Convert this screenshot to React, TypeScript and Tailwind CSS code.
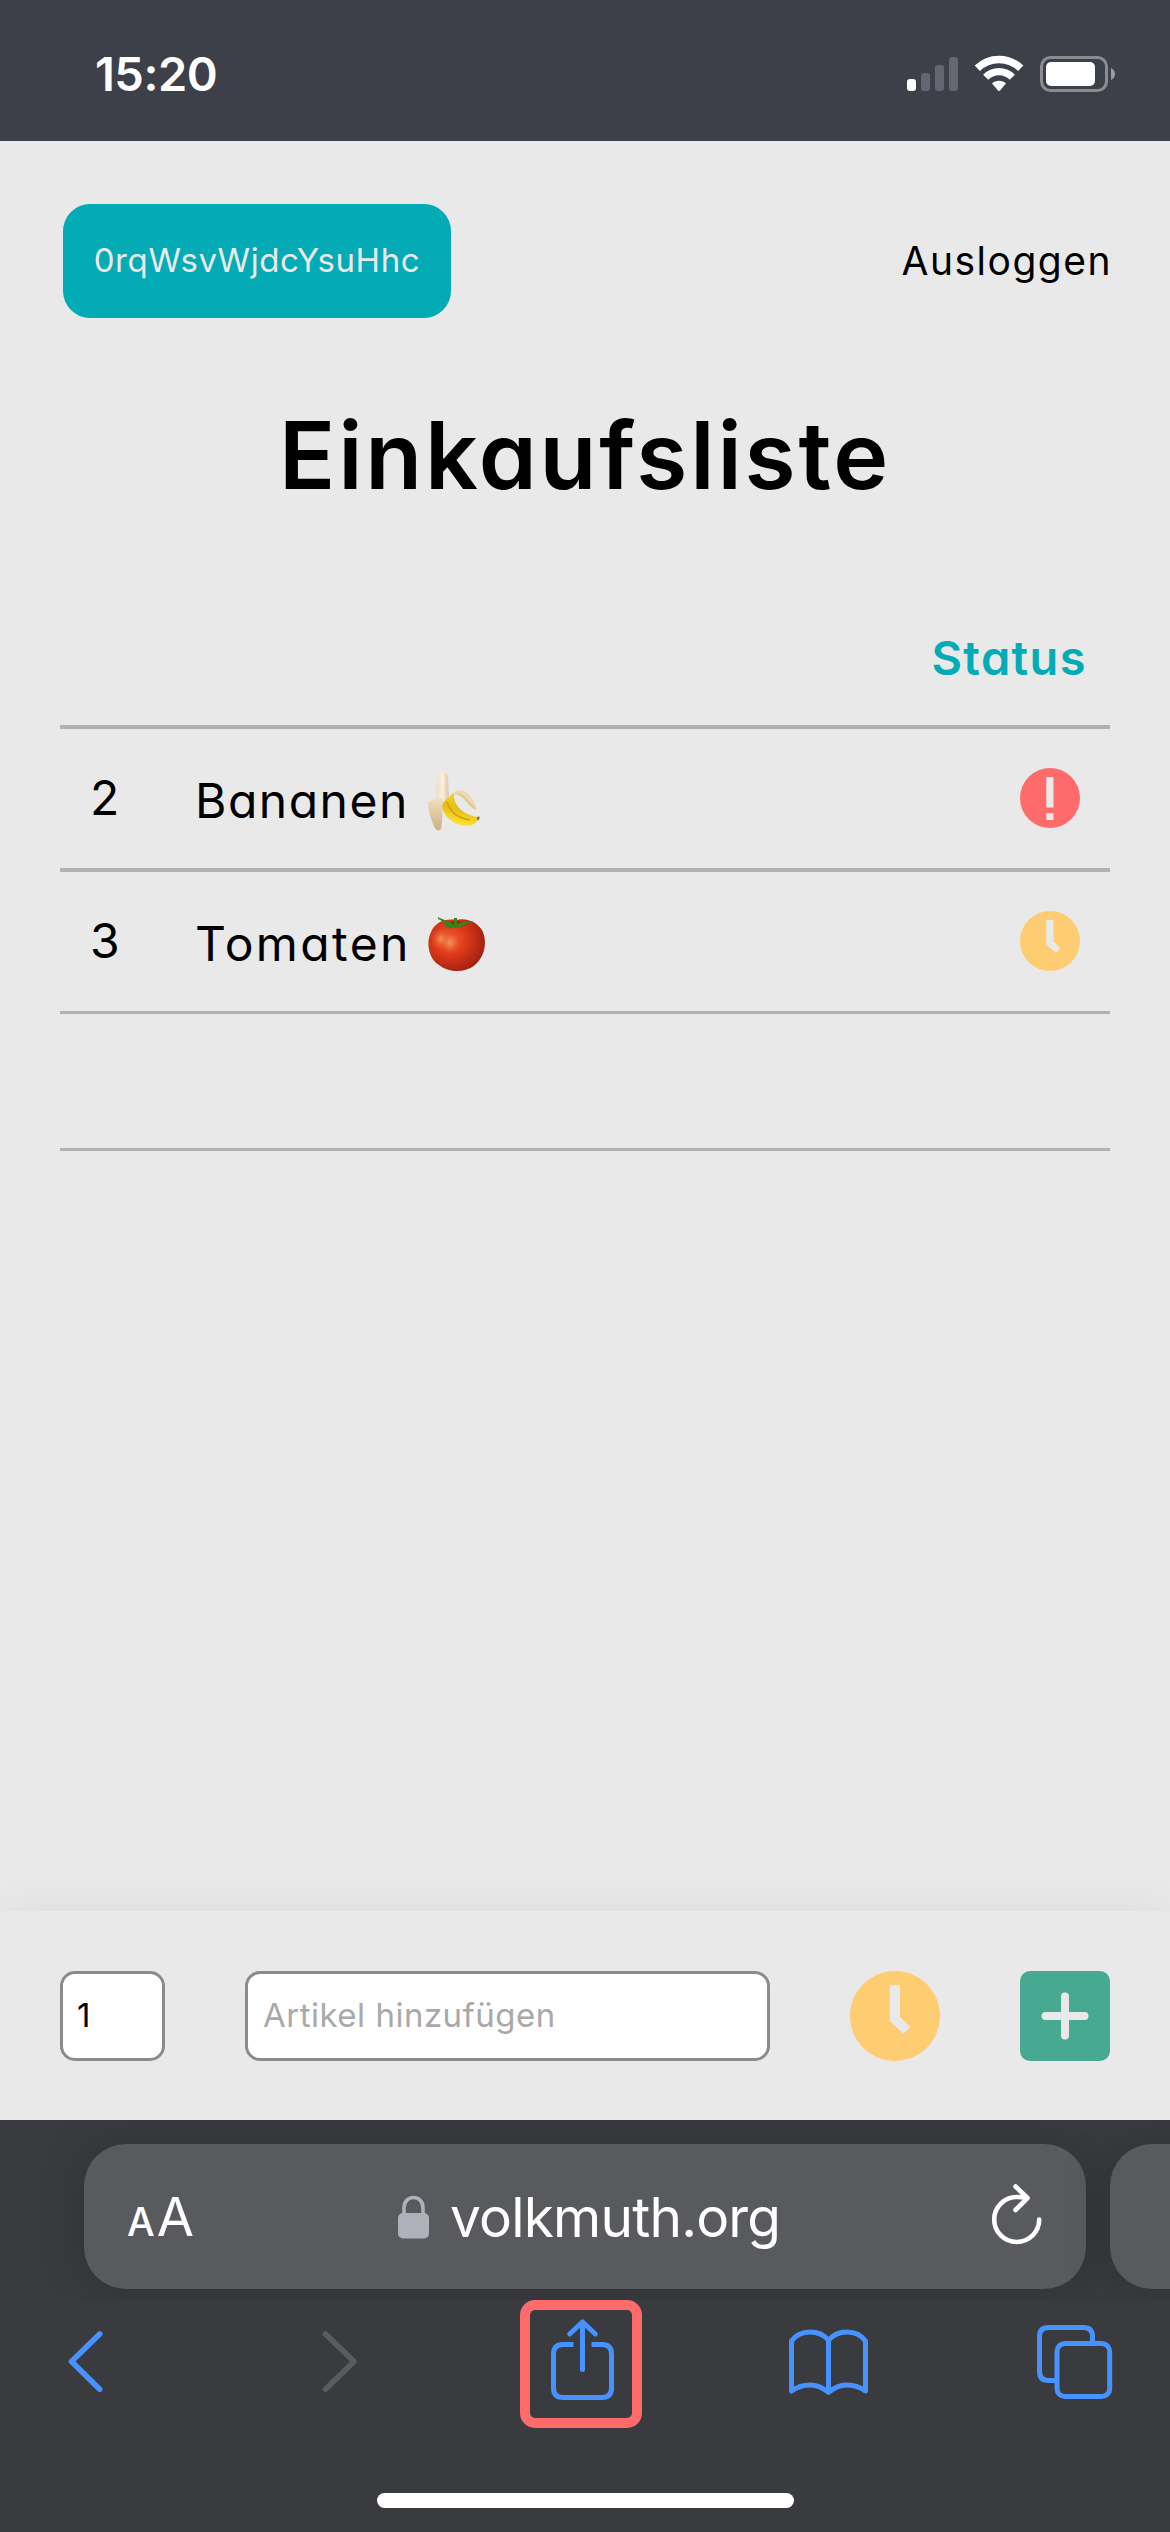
import { ReactElement } from "react";

type Status = "urgent" | "later";

interface Article {
    amount: number;
    name: string;
    nameClass: string;
    icon: ReactElement;
    status: Status;
}

function Banana() {
    return (
        <svg width="54" height="60" viewBox="0 0 54 60">
            <defs>
                <linearGradient id="flesh" x1="0" x2="1">
                    <stop offset="0" stopColor="#efdcc0" />
                    <stop offset="0.5" stopColor="#fbf0de" />
                    <stop offset="1" stopColor="#dcc19c" />
                </linearGradient>
                <linearGradient id="peel" x1="0" y1="0" x2="0" y2="1">
                    <stop offset="0" stopColor="#f2dfc0" />
                    <stop offset="1" stopColor="#cbb083" />
                </linearGradient>
                <linearGradient id="skin" x1="0.6" y1="0" x2="0.35" y2="1">
                    <stop offset="0" stopColor="#f6d335" />
                    <stop offset="0.5" stopColor="#e8bd12" />
                    <stop offset="1" stopColor="#ffe93f" />
                </linearGradient>
            </defs>
            <path d="M10 28C9 18 9 7 12 2.500C14 0 18 0 20 3C22 9 21 18 22 25L19 32Z" fill="url(#flesh)" />
            <path d="M23 26C26 20 32 18 37 20C43 23 48 31 50 38C48 40 45 38 42 34C38 29 33 23 28 24L24 31Z" fill="#ecd9ae" />
            <path d="M29 22C36 22 42 31 49 38C43 37 38 25 29 22Z" fill="#dbc08b" />
            <path d="M21 27C23 26 24 23 27 22C26 33 34 43 50 46L52.500 46C53 48 51 49 50 50C47 55 40 56 33 54C23 51 16 43 15 36C15 31 18 29 21 27Z" fill="url(#skin)" />
            <path d="M20 31C23 41 30 47 43 49" fill="none" stroke="#d1a00d" strokeWidth="1.500" />
            <path d="M50 46L52.500 45.500L52 49L50.500 49Z" fill="#777319" />
            <path d="M1 31C4 29 10 28 16 27C15 37 16 49 14 58C12 60 10 60 8 57C4 49 1 39 1 31Z" fill="url(#peel)" />
        </svg>
    );
}

function Tomato() {
    return (
        <svg width="60" height="56" viewBox="0 0 60 56">
            <defs>
                <radialGradient id="tomato" cx="0.38" cy="0.4" r="0.65">
                    <stop offset="0" stopColor="#f4603a" />
                    <stop offset="0.45" stopColor="#dd3a19" />
                    <stop offset="1" stopColor="#9f2010" />
                </radialGradient>
                <radialGradient id="glow">
                    <stop offset="0" stopColor="#f6a060" stopOpacity="0.85" />
                    <stop offset="1" stopColor="#e55a28" stopOpacity="0" />
                </radialGradient>
            </defs>
            <path d="M29 4C40 1 52 7 56 16C60 27 58 40 48 49C38 57 22 57 12 49C1 42-1 26 4 16C8 6 19 2 29 4Z" fill="url(#tomato)" />
            <ellipse cx="14" cy="23" rx="10" ry="11" fill="url(#glow)" />
            <ellipse cx="23" cy="27" rx="10" ry="11" fill="url(#glow)" />
            <path d="M18 7C22 12 34 13 42 7L28 5Z" fill="#9c210c" />
            <path d="M11 1C15 4 22 4 27 9L27 2L30 2L30 8C35 6 42 4 47 6C42 6 37 9 33 12C29 11 24 14 19 11C18 7 14 4 11 3Z" fill="#3c8218" />
        </svg>
    );
}

function UrgentIcon() {
    return (
        <svg className="size-[60px]" viewBox="0 0 60 60">
            <circle cx="30" cy="30" r="30" fill="#ff6b6b" />
            <path d="M26.300 9h7.200v30.500h-7.200zM26.300 45.300h7.200v6.700h-7.200z" fill="#e9e9e9" />
        </svg>
    );
}

function ClockIcon() {
    return (
        <svg className="size-[60px]" viewBox="0 0 60 60">
            <circle cx="30" cy="30" r="30" fill="#fecd71" />
            <path d="M26.300 9H33.500V30.300L40.200 37.300L35.700 41.900L26.300 33.500Z" fill="#e9e9e9" />
        </svg>
    );
}

const articles: Article[] = [
    { amount: 2, name: "Bananen", nameClass: "tracking-[1.5px]", icon: <Banana />, status: "urgent" },
    { amount: 3, name: "Tomaten", nameClass: "tracking-[2.4px]", icon: <Tomato />, status: "later" },
];

function StatusBar() {
    return (
        <div className="h-[141px] shrink-0 bg-[#3d4049] flex justify-between pl-[95px] pr-[55px]">
            <div className="text-white font-semibold text-[47px] leading-[60px] tracking-[-0.5px] pt-[44px]">15:20</div>
            <svg className="mt-[50px]" width="210" height="46" viewBox="905 50 210 46">
                <rect x="907" y="79" width="9" height="12" rx="3" fill="#fff" />
                <rect x="921" y="73" width="9" height="18" rx="3" fill="#646670" />
                <rect x="935" y="65" width="9" height="26" rx="3" fill="#646670" />
                <rect x="949" y="57" width="9" height="34" rx="3" fill="#646670" />
                <g fill="none" stroke="#fff">
                    <path d="M977.300 68.300A31 31 0 0 1 1020.700 68.300" strokeWidth="7.500" />
                    <path d="M985.700 77.200A18.500 18.500 0 0 1 1012.300 77.200" strokeWidth="7.200" />
                </g>
                <path d="M992 83.500C995.500 79.700 1002.500 79.700 1006 83.500L1000 90.500Q999 91.500 998 90.500Z" fill="#fff" />
                <rect x="1041.500" y="57.500" width="65" height="33" rx="9" fill="none" stroke="#8b8c92" strokeWidth="3" />
                <rect x="1046" y="62" width="49" height="24" rx="5" fill="#fff" />
                <path d="M1111 68Q1115 70 1115 74Q1115 78 1111 80Z" fill="#9c9da2" />
            </svg>
        </div>
    );
}

function Header() {
    return (
        <div className="flex justify-between items-center pt-[63px] pl-[63px] pr-[58px]">
            <div className="w-[388px] h-[114px] rounded-[27px] bg-[#02abb5] text-[#e9e9e9] text-[33px] tracking-[0.6px] flex items-center justify-center">
                0rqWsvWjdcYsuHhc
            </div>
            <div className="text-[39px] tracking-[1.5px] text-black">Ausloggen</div>
        </div>
    );
}

function ArticleRow({ article }: { article: Article }) {
    return (
        <div className="h-[139px] flex items-center pb-px pl-[30px] pr-[30px] text-[48px] leading-[60px] text-black">
            <div className="w-[105px]">{article.amount}</div>
            <div className="flex-1 flex items-center pt-[6px]">
                <div className="w-[232px]">
                    <span className={article.nameClass}>{article.name}</span>
                </div>
                {article.icon}
            </div>
            {article.status === "urgent" ? <UrgentIcon /> : <ClockIcon />}
        </div>
    );
}

function ArticleList() {
    return (
        <div className="mx-[60px]">
            <div className="h-[210px] flex items-end justify-end pb-[37px] pr-[23px] text-[47px] leading-[60px] tracking-[1.4px] font-semibold text-[#02abb5]">
                Status
            </div>
            <div className="h-1 bg-[#b1b1b1]" />
            <ArticleRow article={articles[0]} />
            <div className="h-1 bg-[#b1b1b1]" />
            <ArticleRow article={articles[1]} />
            <div className="h-[3px] bg-[#b1b1b1]" />
            <div className="h-[134px]" />
            <div className="h-[3px] bg-[#b1b1b1]" />
        </div>
    );
}

function AddArticle() {
    return (
        <div className="h-[209px] shrink-0 bg-[#e9e9e9] px-[60px] flex items-center shadow-[0_0_45px_rgba(0,0,0,0.06)]">
            <div className="w-[105px] h-[90px] bg-white border-3 border-[#8b8b8f] rounded-[15px] flex items-center pl-[14px] text-[33px] text-black">
                1
            </div>
            <div className="ml-[80px] w-[525px] h-[90px] bg-white border-3 border-[#8b8b8f] rounded-[15px] flex items-center pl-[15px] text-[33px] tracking-[0.5px] text-[#a9a9a9]">
                Artikel hinzufügen
            </div>
            <svg className="ml-[80px] size-[90px]" viewBox="0 0 90 90">
                <circle cx="45" cy="45" r="45" fill="#fecd71" />
                <path d="M39.700 14H50V45.700L60.200 56L53.500 62.700L39.700 49.700Z" fill="#e9e9e9" />
            </svg>
            <button className="ml-[80px] size-[90px] rounded-[10px] bg-[#48a992]">
                <svg className="size-[90px]" viewBox="0 0 90 90">
                    <path d="M45 25.500V64.500M25.500 45H64.500" stroke="#e9e9e9" strokeWidth="8" strokeLinecap="round" />
                </svg>
            </button>
        </div>
    );
}

function AddressBar() {
    return (
        <div className="flex pt-[24px] pl-[84px] gap-6 overflow-hidden h-[180px]">
            <div className="w-[1002px] h-[145px] shrink-0 rounded-[42px] bg-[#595a5e] shadow-[0_0_50px_rgba(0,0,0,0.18)] flex items-center text-white">
                <div className="w-[314px] pl-[43px] flex items-baseline">
                    <span className="text-[39px] font-medium">A</span>
                    <span className="text-[54px] ml-[2px]">A</span>
                </div>
                <svg width="31" height="44" viewBox="0 0 31 44">
                    <path d="M6 20V13C6 -1 25 -1 25 13V20" fill="none" stroke="#afb0b9" strokeWidth="3.600" />
                    <rect y="18" width="31" height="25.500" rx="5" fill="#afb0b9" />
                </svg>
                <div className="text-[55px] leading-[70px] tracking-[-0.8px] ml-[21px] w-[539px]">volkmuth.org</div>
                <svg className="-mt-2" width="56" height="66" viewBox="989 2180 56 66">
                    <g fill="none" stroke="#fff" strokeWidth="4.600" strokeLinecap="round" strokeLinejoin="round">
                        <path d="M1039.200 2219.500A22.500 22.500 0 1 1 1016.700 2197Q1022 2197 1027 2198" />
                        <path d="M1015.500 2186.500L1027.500 2198L1015.500 2210" />
                    </g>
                </svg>
            </div>
            <div className="w-[1002px] h-[145px] shrink-0 rounded-[42px] bg-[#595a5e] shadow-[0_0_50px_rgba(0,0,0,0.18)]" />
        </div>
    );
}

function Toolbar() {
    return (
        <div className="flex h-[128px] text-[#4792ff]">
            <svg className="ml-[65px] mt-[28px]" width="40" height="68" viewBox="65 2328 40 68">
                <path d="M99.700 2334L71.500 2361.500L99.700 2389.300" fill="none" stroke="currentColor" strokeWidth="5.600" strokeLinecap="round" strokeLinejoin="round" />
            </svg>
            <svg className="ml-[215px] mt-[28px]" width="40" height="68" viewBox="320 2328 40 68">
                <path d="M325.500 2334L354 2361.500L325.500 2389.300" fill="none" stroke="#5a5b5e" strokeWidth="5.600" strokeLinecap="round" strokeLinejoin="round" />
            </svg>
            <div className="ml-[160px] w-[122px] h-[128px] rounded-[15px] border-10 border-[#ff6b6b]">
                <svg width="102" height="108" viewBox="530 2310 102 108">
                    <g fill="none" stroke="currentColor" strokeWidth="5">
                        <path d="M573.500 2344.500H563Q553.500 2344.500 553.500 2354V2388Q553.500 2397.500 563 2397.500H602Q611.500 2397.500 611.500 2388V2354Q611.500 2344.500 602 2344.500H591.500" />
                        <path d="M582.500 2323V2369.500M569.700 2334L582.500 2322L595.300 2334" strokeLinecap="round" strokeLinejoin="round" />
                    </g>
                </svg>
            </div>
            <svg className="ml-[144px] mt-[25px]" width="86" height="74" viewBox="786 2325 86 74">
                <path d="M791.500 2391V2341Q798 2332 810 2332Q822 2332 828.500 2340.500Q835 2332 847 2332Q859 2332 865.500 2341V2391Q857 2385 847 2385Q837 2385 828.500 2392.500Q820 2385 810 2385Q800 2385 791.500 2391ZM828.500 2340.500V2392" fill="none" stroke="currentColor" strokeWidth="5" strokeLinecap="round" strokeLinejoin="round" />
            </svg>
            <svg className="ml-[162px] mt-[22px]" width="82" height="80" viewBox="1034 2322 82 80">
                <g fill="none" stroke="currentColor" strokeWidth="5">
                    <path d="M1092.500 2341.500V2336.500Q1092.500 2327.500 1083.500 2327.500H1048.500Q1039.500 2327.500 1039.500 2336.500V2371.500Q1039.500 2380.500 1048.500 2380.500H1055" />
                    <rect x="1057" y="2343.500" width="52.700" height="53" rx="8" />
                </g>
            </svg>
        </div>
    );
}

export default function App() {
    return (
        <div className="w-[1170px] h-[2532px] flex flex-col bg-[#e9e9e9] font-['Inter','Liberation_Sans',sans-serif] whitespace-nowrap overflow-hidden">
            <StatusBar />
            <div className="flex-1 flex flex-col [font-feature-settings:'cv11']">
                <Header />
                <h1 className="mt-[77px] text-center text-[93px] leading-[120px] tracking-[2.8px] font-semibold text-black">Einkaufsliste</h1>
                <ArticleList />
                <div className="flex-1" />
                <AddArticle />
            </div>
            <div className="h-[412px] shrink-0 bg-[#3a3b3f] flex flex-col">
                <AddressBar />
                <Toolbar />
                <div className="mt-[65px] ml-[377px] w-[417px] h-[15px] rounded-full bg-white" />
            </div>
        </div>
    );
}
